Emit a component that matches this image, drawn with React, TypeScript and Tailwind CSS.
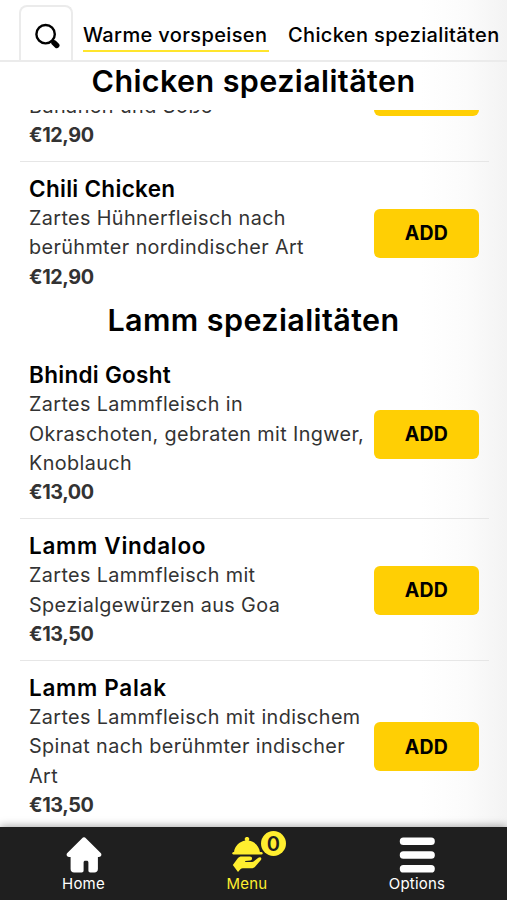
import React from 'react';

interface MenuItem {
  name: string;
  nameClass: string;
  lines: string[];
  price: string;
}

const chickenItems: MenuItem[] = [
  {
    name: 'Chili Chicken',
    nameClass: 'tracking-[0.3px]',
    lines: ['Zartes Hühnerfleisch nach', 'berühmter nordindischer Art'],
    price: '€12,90',
  },
];

const lammItems: MenuItem[] = [
  {
    name: 'Bhindi Gosht',
    nameClass: 'tracking-[0.3px]',
    lines: ['Zartes Lammfleisch in', 'Okraschoten, gebraten mit Ingwer,', 'Knoblauch'],
    price: '€13,00',
  },
  {
    name: 'Lamm Vindaloo',
    nameClass: 'tracking-[0.7px]',
    lines: ['Zartes Lammfleisch mit', 'Spezialgewürzen aus Goa'],
    price: '€13,50',
  },
  {
    name: 'Lamm Palak',
    nameClass: 'tracking-[0.7px]',
    lines: ['Zartes Lammfleisch mit indischem', 'Spinat nach berühmter indischer', 'Art'],
    price: '€13,50',
  },
];

const SearchIcon: React.FC = () => (
  <svg width="28" height="28" viewBox="0 0 28 28" fill="none" stroke="#000" className="shrink-0">
    <circle cx="12.6" cy="12.2" r="9.2" strokeWidth="2.4" />
    <path d="M18.8 18.4l2 2" strokeWidth="3" />
    <path d="M21 20.8l2.8 2.6" strokeWidth="5.4" strokeLinecap="round" />
  </svg>
);

const HomeIcon: React.FC = () => (
  <svg width="36" height="36" viewBox="0 0 36 36" fill="#fff">
    <path d="M15.9 1.4a3 3 0 0 1 4.2 0L34.7 16c1.5 1.7.5 4-1.8 4h-1v12c0 2.2-1.3 3.5-3.5 3.5h-4c-1.3 0-2-.7-2-2v-7.9c0-1.3-.6-1.9-1.8-1.9h-1.2c-1.2 0-1.8.6-1.8 1.9v7.9c0 1.3-.7 2-2 2H8.1c-2.2 0-3.5-1.3-3.5-3.5V20H3.1c-2.3 0-3.3-2.3-1.8-4z" />
  </svg>
);

const ServingIcon: React.FC = () => (
  <svg width="32" height="36" viewBox="0 0 32 36" fill="#ffee2f">
    <path d="M14.4 3.6a2.2 2.2 0 1 1 3.2 0C23.8 4.6 28.4 9.4 29 15.4H3C3.6 9.4 8.2 4.6 14.4 3.6z" />
    <rect x="1.4" y="15" width="30.2" height="2.4" rx="1.2" />
    <path d="M1.8 28l5-6.7c1-1.2 2.2-1.7 3.8-1.7h8.3c2.8 0 2.9 3.5.3 3.8l-5 .6v1.1h5.8c1.6 0 2.6-.5 3.8-1.5l3.5-2.8c2-1.5 4 .3 2.6 2.2l-5.4 6.3c-1.2 1.4-2.4 2-4.2 2h-8.5c-1 0-1.7.3-2.4 1l-2.4 2.6z" />
  </svg>
);

const OptionsIcon: React.FC = () => (
  <svg width="36" height="36" viewBox="0 0 36 36" fill="#fff">
    <rect x="0.8" y="0.5" width="35" height="7.6" rx="3.6" />
    <rect x="0.8" y="14.2" width="35" height="7.6" rx="3.6" />
    <rect x="0.8" y="27.9" width="35" height="7.6" rx="3.6" />
  </svg>
);

const AddButton: React.FC = () => (
  <button className="h-[49px] w-[105px] shrink-0 rounded-md bg-[#ffcf04] pt-px text-[19.5px] font-bold tracking-[0.2px] text-black">
    ADD
  </button>
);

const SectionTitle: React.FC<{ children: React.ReactNode }> = ({ children }) => (
  <h2 className="text-center text-[30.5px] leading-[44px] font-semibold tracking-[0.4px] whitespace-nowrap text-black">
    {children}
  </h2>
);

const MenuRow: React.FC<{ item: MenuItem; last?: boolean }> = ({ item, last }) => (
  <li
    className={`mr-[18px] ml-5 flex items-center justify-between border-b pt-3 pr-[10px] pb-[10.5px] pl-[9px] ${
      last ? 'border-transparent' : 'border-[#e6e6e6]'
    }`}
  >
    <div className="w-0 flex-1 text-[19.8px] leading-[29.4px] tracking-[0.38px] whitespace-nowrap text-[#333]">
      <h3 className={`text-[22.5px] leading-[30px] font-semibold text-black ${item.nameClass}`}>{item.name}</h3>
      {item.lines.map((line) => (
        <p key={line}>{line}</p>
      ))}
      <p className="font-bold tracking-[-0.4px]">{item.price}</p>
    </div>
    <AddButton />
  </li>
);

export default function App() {
  return (
    <div className="flex h-[900px] w-[507px] flex-col overflow-hidden bg-[linear-gradient(to_right,#fff_83%,#fbfbfb_92%,#f3f3f3_100%)] font-['Inter','Liberation_Sans',sans-serif]">
      {/* Category tabs */}
      <header className="flex h-[62px] shrink-0 items-end border-b-2 border-[#ebebeb] pl-[19px]">
        <div className="flex h-[55px] w-[54px] shrink-0 items-center justify-center rounded-t-lg border-2 border-b-0 border-[#ebebeb] bg-white pt-1 pl-0.5">
          <SearchIcon />
        </div>
        <nav className="ml-[10px] flex gap-[19px] pb-2 text-[20px] font-medium tracking-[0.36px] whitespace-nowrap text-black">
          <span className="w-[186px] border-b-[2.5px] border-[#ffe52d] pb-px leading-7">Warme vorspeisen</span>
          <span className="pb-[3px] leading-7">Chicken spezialitäten</span>
        </nav>
      </header>

      <div className="-mt-[3px] h-[51px] shrink-0">
        <SectionTitle>Chicken spezialitäten</SectionTitle>
      </div>

      {/* Scrolled menu list */}
      <main className="flex min-h-0 flex-1 flex-col overflow-hidden">
        <div className="mr-[18px] ml-5 flex h-[52px] shrink-0 items-end justify-between overflow-hidden border-b border-[#e6e6e6] pr-[10px] pb-[10.5px] pl-[9px] text-[19.8px] leading-[29.4px] tracking-[0.45px] text-[#333]">
          <div>
            <p>Bananen und Soße</p>
            <p className="font-bold tracking-[-0.4px]">€12,90</p>
          </div>
          <div className="mb-[35px]">
            <AddButton />
          </div>
        </div>
        <ul className="shrink-0">
          {chickenItems.map((item) => (
            <MenuRow key={item.name} item={item} last />
          ))}
        </ul>
        <div className="-mt-1.5 h-[50.5px] shrink-0">
          <SectionTitle>Lamm spezialitäten</SectionTitle>
        </div>
        <ul className="shrink-0">
          {lammItems.map((item, index) => (
            <MenuRow key={item.name} item={item} last={index === lammItems.length - 1} />
          ))}
        </ul>
      </main>

      {/* Bottom navigation */}
      <footer className="relative flex h-[73px] shrink-0 bg-[#1f1f1f] text-[15px] leading-5 tracking-[0.2px] text-white shadow-[0_-1px_8px_rgba(0,0,0,0.35)]">
        <div className="flex w-[167px] flex-col items-center pt-[10px]">
          <HomeIcon />
          <span className="mt-px">Home</span>
        </div>
        <div className="flex w-[160px] flex-col items-center pt-[10px] text-[#ffee2f]">
          <div className="relative">
            <ServingIcon />
            <span className="absolute -top-[6px] left-[30px] flex size-[25px] items-center justify-center rounded-full bg-[#ffee2f] text-[20px] font-semibold text-[#1f1f1f]">
              0
            </span>
          </div>
          <span className="mt-px">Menu</span>
        </div>
        <div className="flex w-[180px] flex-col items-center pt-[10px]">
          <OptionsIcon />
          <span className="mt-px">Options</span>
        </div>
      </footer>
    </div>
  );
}
